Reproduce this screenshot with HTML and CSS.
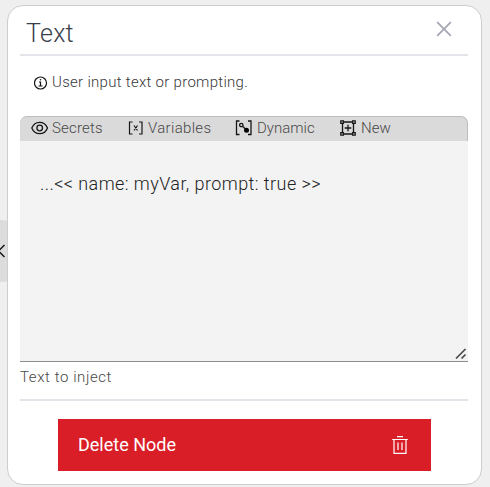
FILE: index.html
```html
<!DOCTYPE html>
<html lang="en">
<head>
<meta charset="utf-8">
<title>Text</title>
<link rel="stylesheet" href="styles.css">
</head>
<body>
<div class="handle"><svg width="8" height="16" viewBox="0 0 8 16"><path d="M4.500 2-1.500 8l6 6" fill="none" stroke="#161616" stroke-width="1.500"/></svg></div>
<main class="panel">
  <header class="header">
    <h1 class="title">Text</h1>
    <button class="close" aria-label="Close"><svg width="16" height="16" viewBox="0 0 16 16"><path d="M1.200 1.200l13.600 13.600M14.800 1.200 1.200 14.800" fill="none" stroke="#a6a6b5" stroke-width="1.800"/></svg></button>
  </header>
  <p class="info">
    <svg width="14" height="14" viewBox="0 0 14 14"><circle cx="6.500" cy="7" r="6" fill="none" stroke="#161616" stroke-width="1.200"/><path d="M5 6h1.500v4M4.500 10h4" fill="none" stroke="#161616" stroke-width="1.200"/><circle cx="6.500" cy="3.800" r=".8" fill="#161616"/></svg>
    <span class="t-info">User input text or prompting.</span>
  </p>
  <nav class="toolbar">
    <a class="tool secrets"><svg width="17" height="14" viewBox="0 0 17 14"><path d="M.8 7C2.300 3.300 5 1.300 8.700 1.300S15 3.300 16.500 7C15 10.700 12.300 12.700 8.700 12.700S2.300 10.700.8 7Z" fill="none" stroke="#161616" stroke-width="1.300"/><circle cx="8.700" cy="7" r="2.800" fill="none" stroke="#161616" stroke-width="1.300"/></svg><span>Secrets</span></a>
    <a class="tool variables"><svg width="15" height="14" viewBox="0 0 15 14"><path d="M4.500 1h-3v12h3M11 1h3v12h-3M6 4.500l3.500 5M9.500 4.500 6 9.500" fill="none" stroke="#161616" stroke-width="1.200"/></svg><span>Variables</span></a>
    <a class="tool dynamic"><svg width="17" height="16" viewBox="0 0 17 16"><path d="M4.500 1h-3v13.500h3M13 1h3v13.500h-3M7.500 6.300l3 2.700" fill="none" stroke="#161616" stroke-width="1.300"/><circle cx="6.300" cy="5" r="1.700" fill="none" stroke="#161616" stroke-width="1.300"/><circle cx="11.500" cy="10.200" r="2.500" fill="#000"/></svg><span>Dynamic</span></a>
    <a class="tool new"><svg width="16" height="16" viewBox="0 0 16 16"><path d="M2.500 2h11v12h-11zM8 4.700v6.600M4.700 8h6.600" fill="none" stroke="#161616" stroke-width="1.300"/><g fill="#dadada" stroke="#161616" stroke-width="1.300"><path d="M.8.8h2.600v2.600H.8zM12.600.8h2.600v2.600h-2.600zM.8 12.600h2.600v2.600H.8zM12.600 12.600h2.600v2.600h-2.600z"/></g></svg><span>New</span></a>
  </nav>
  <div class="field">
    <textarea class="input" aria-label="Text to inject" spellcheck="false">...&lt;&lt; name: myVar, prompt: true &gt;&gt;</textarea>
    <svg class="grip" width="12" height="12" viewBox="0 0 12 12"><path d="M1 10.500 10.500 1M6.500 10.500l4-4" fill="none" stroke="#4a4a4a" stroke-width="1.700"/></svg>
  </div>
  <p class="helper"><span>Text to inject</span></p>
  <footer class="footer">
    <button class="delete"><span>Delete Node</span><svg width="16" height="18" viewBox="0 0 16 18" fill="none" stroke="#fff" stroke-width="1.200"><path d="M5 .7h6M.2 3.500h15.600M2 3.500v13.800h12V3.500M6 6.500v7.500M10 6.500v7.500"/></svg></button>
  </footer>
</main>
</body>
</html>
```
FILE: styles.css
```css
* { box-sizing: border-box; }
body {
  margin: 0;
  height: 487px;
  padding: 5px 8px 2px 7px;
  overflow: hidden;
  background: #efefef;
  color: #393939;
  font-family: "Roboto", "Liberation Sans", sans-serif;
  font-weight: 300;
}
h1, p { margin: 0; font-weight: 300; }
svg { display: block; flex: none; }
button { border: 0; padding: 0; background: none; font: inherit; }
.handle {
  position: absolute;
  left: -8px;
  top: 220px;
  width: 16px;
  height: 62px;
  padding: 23px 0 0 8px;
  border-radius: 14px / 3px;
  background: linear-gradient(#dcdcdc, #dcdcdc);
}
.panel {
  position: relative;
  height: 480px;
  padding: 0 13px 0 12px;
  border: 1px solid #cdcdcd;
  border-radius: 16px;
  background: #fff;
}
.header {
  display: flex;
  justify-content: space-between;
  height: 50px;
  padding: 11px 16px 0 6px;
  border-bottom: 2px solid #e4e4eb;
}
.title { margin-top: 1px; font-size: 25px; line-height: 32px; color: #393f4a; letter-spacing: .25px; }
.close { height: 16px; margin-top: 4px; }
.info {
  display: flex;
  align-items: center;
  gap: 4px;
  height: 52px;
  padding-left: 14px;
  font-size: 15px;
  white-space: nowrap;
}
.info svg { margin-top: 2px; }
.t-info { letter-spacing: .29px; }
.toolbar {
  display: flex;
  height: 25px;
  margin-top: 8px;
  padding: 0 0 2px 11px;
  border: solid #bdbdbd;
  border-width: 1px 1px 0 0;
  border-radius: 7px 7px 0 0;
  background: #dadada;
  font-size: 15px;
}
.tool { display: flex; align-items: center; gap: 5px; color: #484848; white-space: nowrap; }
.secrets { width: 97px; gap: 4px; letter-spacing: .2px; }
.variables { width: 107px; letter-spacing: .32px; }
.dynamic { width: 105px; }
.field { position: relative; height: 221px; }
.input {
  display: block;
  width: 100%;
  height: 100%;
  margin: 0;
  padding: 32px 20px;
  border: 0;
  border-bottom: 1px solid #8d8d8d;
  border-radius: 0;
  resize: none;
  background: #f3f3f3;
  color: #222;
  font: 300 18px/22px "Roboto", sans-serif;
  letter-spacing: .43px;
}
.grip { position: absolute; right: 1px; bottom: 2px; }
.helper {
  height: 37px;
  padding-top: 5px;
  color: #484848;
  font-size: 15px;
  line-height: 20px;
  letter-spacing: .58px;
}
.footer { padding: 18px 37px 0 38px; border-top: 2px solid #e4e4eb; }
.delete {
  display: flex;
  align-items: center;
  justify-content: space-between;
  width: 100%;
  height: 52px;
  padding: 0 23px 2px 20px;
  background: #da1e28;
  color: #fff;
  font-size: 18px;
  font-weight: 400;
}
.delete svg { margin-top: 2px; }
```
